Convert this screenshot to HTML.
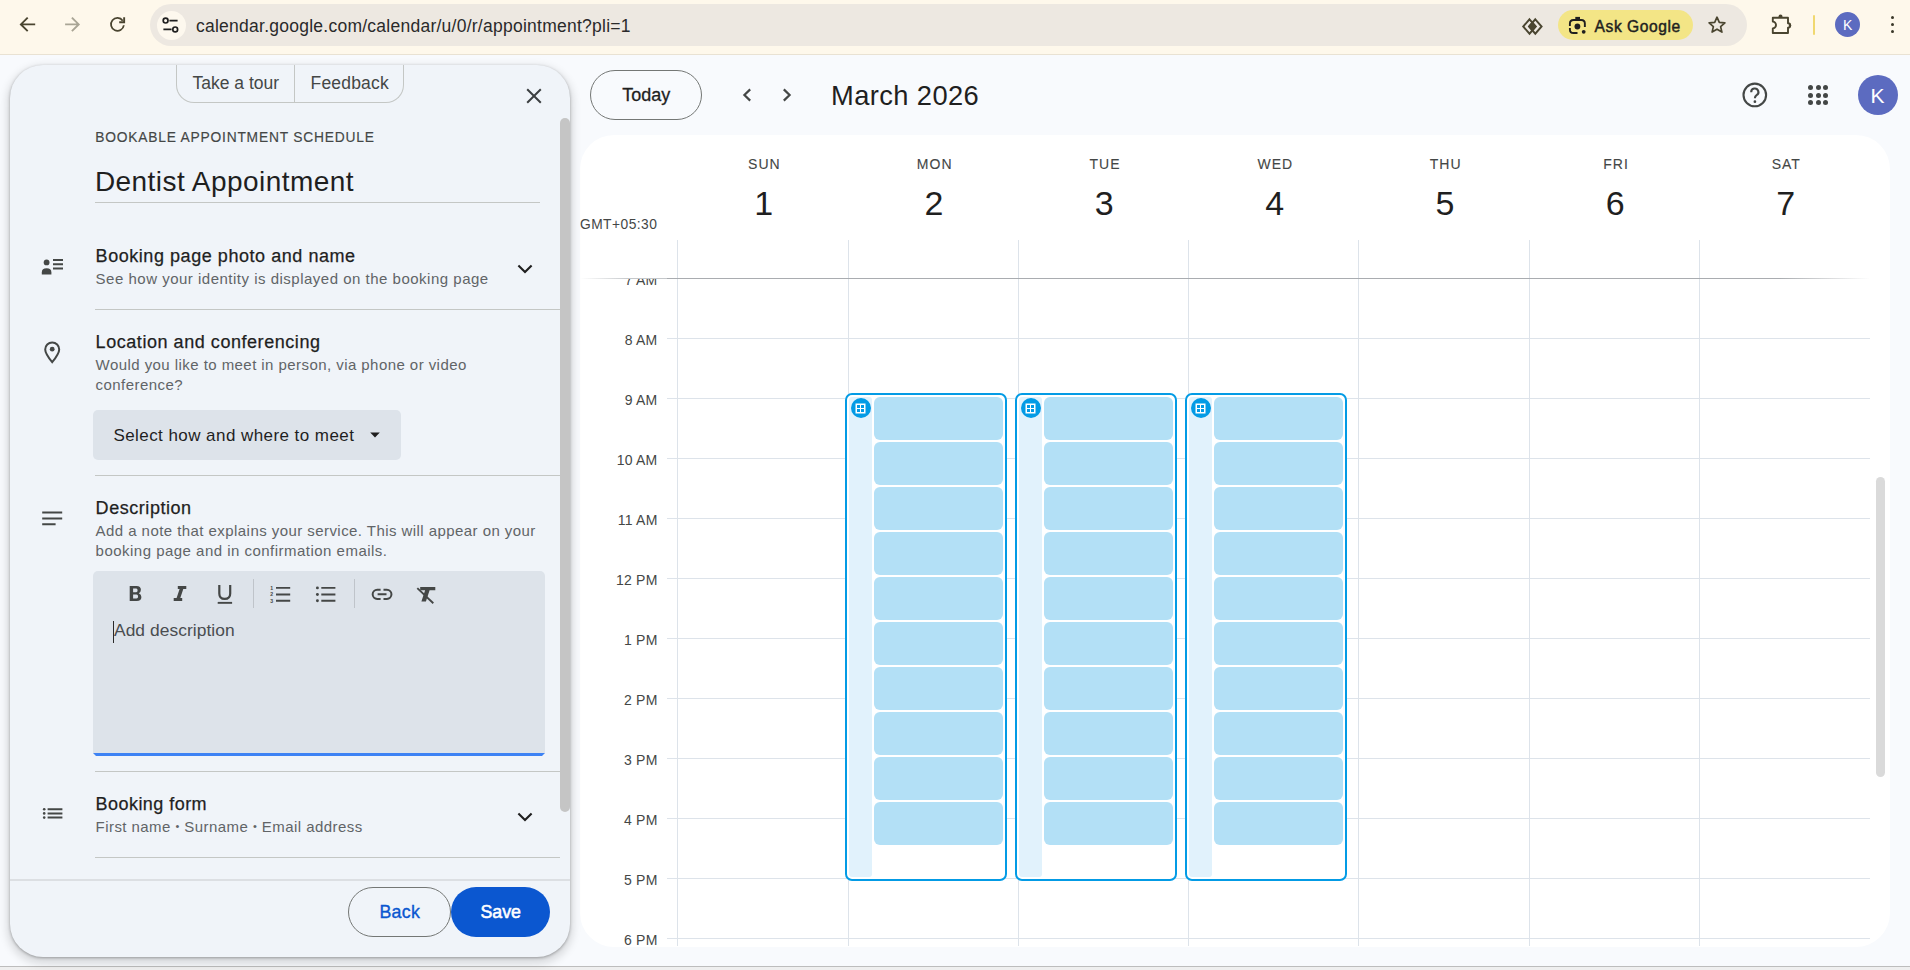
<!DOCTYPE html>
<html><head><meta charset="utf-8">
<style>
*{box-sizing:border-box;margin:0;padding:0}
html,body{width:1910px;height:970px;overflow:hidden;background:#F8FAFD;font-family:"Liberation Sans",sans-serif;color:#1F1F1F}
.a{position:absolute}
svg.a{overflow:visible}
.t{position:absolute;white-space:nowrap;line-height:1}
</style></head><body>
<div class="a" style="left:0px;top:0px;width:1910px;height:54px;background:#FEF8EB;"></div>
<div class="a" style="left:0px;top:54px;width:1910px;height:1px;background:#E9E2D3;"></div>
<svg class="a" style="left:19px;top:16px" width="18" height="18" viewBox="0 0 18 18"><path d="M16.2 8.4H2.6M8.7 1.6L1.9 8.4L8.7 15.2" fill="none" stroke="#4A4530" stroke-width="1.9"/></svg>
<svg class="a" style="left:64px;top:16px" width="18" height="18" viewBox="0 0 18 18"><path d="M1.1 8.4H14.4M7.9 1.6L14.7 8.4L7.9 15.2" fill="none" stroke="#A9A595" stroke-width="1.9"/></svg>
<svg class="a" style="left:109px;top:16px" width="18" height="18" viewBox="0 0 18 18"><path d="M13.73 4.65A6.45 6.45 0 1 0 14.84 9.25" fill="none" stroke="#4A4530" stroke-width="1.8"/><path d="M15.15 1.2V6.3H10.2" fill="none" stroke="#4A4530" stroke-width="1.9"/></svg>
<div class="a" style="left:150px;top:4px;width:1597px;height:42px;background:#EDE8E1;border-radius:21px"></div>
<div class="a" style="left:156.5px;top:10.5px;width:29.5px;height:29.5px;background:#FDF8EE;border-radius:50%"></div>
<svg class="a" style="left:162px;top:17px" width="18" height="17" viewBox="0 0 18 17"><circle cx="3.6" cy="3.6" r="2.4" fill="none" stroke="#1F1F1F" stroke-width="1.7"/><path d="M7.4 3.6H15.6M1.4 12.4H9.6" stroke="#1F1F1F" stroke-width="1.7"/><circle cx="13.2" cy="12.4" r="2.4" fill="none" stroke="#1F1F1F" stroke-width="1.7"/></svg>
<div class="t" style="left:196.00px;top:18.29px;font-size:17.5px;color:#2A2A2A;letter-spacing:0.25px;font-weight:400;">calendar.google.com/calendar/u/0/r/appointment?pli=1</div>
<svg class="a" style="left:1520px;top:16px" width="26" height="22" viewBox="0 0 26 22"><path d="M9.5 3.3L15.8 10.5L9.5 17.7L3.2 10.5Z" fill="none" stroke="#4A4530" stroke-width="1.9"/><path d="M15.3 3.3L21.6 10.5L15.3 17.7L9 10.5Z" fill="none" stroke="#4A4530" stroke-width="1.9"/><path d="M12.4 5.6L16.7 10.5L12.4 15.4L8.1 10.5Z" fill="#4A4530"/></svg>
<div class="a" style="left:1557.5px;top:10px;width:135px;height:30px;background:#F3E586;border-radius:15px"></div>
<svg class="a" style="left:1566px;top:14px" width="24" height="24" viewBox="0 0 24 24"><path d="M3.9 12V9.5Q3.9 5.95 7.5 5.95H15.3Q18.85 5.95 18.85 9.5V13M3.9 14V15.4Q3.9 18.95 7.5 18.95H11.5" fill="none" stroke="#1F1F1F" stroke-width="1.9"/><rect x="9.3" y="2.9" width="4.7" height="3.2" fill="#1F1F1F"/><circle cx="11.4" cy="12.5" r="2.9" fill="#1F1F1F"/><circle cx="17.7" cy="17.8" r="1.9" fill="#1F1F1F"/></svg>
<div class="t" style="left:1594.60px;top:19.39px;font-size:15.6px;color:#1F1F1F;letter-spacing:0.55px;font-weight:400;-webkit-text-stroke:0.45px #1F1F1F">Ask Google</div>
<svg class="a" style="left:1707px;top:15px" width="20" height="20" viewBox="0 0 20 20"><path d="M10 2.2L12.3 7.4L17.9 7.9L13.6 11.6L14.9 17.1L10 14.2L5.1 17.1L6.4 11.6L2.1 7.9L7.7 7.4Z" fill="none" stroke="#4A4530" stroke-width="1.7" stroke-linejoin="round"/></svg>
<svg class="a" style="left:1768px;top:12px" width="26" height="26" viewBox="0 0 26 26"><path d="M4.8 5.8H20V11.2A2.2 2.2 0 0 1 20 15.6V21H4.8V16.4A3.2 3.4 0 0 0 4.8 9.6Z" fill="none" stroke="#4A4530" stroke-width="1.9" stroke-linejoin="round"/><path d="M10.4 5A2.1 2.4 0 0 1 14.6 5Z" fill="#4A4530"/><path d="M20.8 11.2A2.4 2.2 0 0 1 20.8 15.6Z" fill="#4A4530"/></svg>
<div class="a" style="left:1812.5px;top:15px;width:2.6px;height:20px;background:#F0D870;border-radius:1.3px"></div>
<div class="a" style="left:1835px;top:12px;width:25.2px;height:25.2px;background:#5C6BC0;border-radius:50%"></div>
<div class="t" style="left:1837.60px;top:17.95px;width:20px;text-align:center;font-size:14px;color:#FFFFFF;letter-spacing:0px;font-weight:400;">K</div>
<div class="a" style="left:1890.8px;top:15.8px;width:3.6px;height:3.6px;background:#3A3829;border-radius:50%"></div>
<div class="a" style="left:1890.8px;top:22.7px;width:3.6px;height:3.6px;background:#3A3829;border-radius:50%"></div>
<div class="a" style="left:1890.8px;top:29.5px;width:3.6px;height:3.6px;background:#3A3829;border-radius:50%"></div>
<div class="a" style="left:0px;top:966px;width:1910px;height:1px;background:#BDBDBD;"></div>
<div class="a" style="left:0px;top:967px;width:1910px;height:3px;background:#EFEFEF;"></div>
<div class="a" style="left:590px;top:70px;width:112px;height:50px;background:transparent;border:1px solid #747775;border-radius:25px"></div>
<div class="t" style="left:622.20px;top:86.06px;font-size:18px;color:#1F1F1F;letter-spacing:0px;font-weight:400;-webkit-text-stroke:0.3px #1F1F1F">Today</div>
<svg class="a" style="left:741px;top:88px" width="12" height="14" viewBox="0 0 12 14"><path d="M9.2 1.4L3.4 7L9.2 12.6" fill="none" stroke="#444746" stroke-width="2.2"/></svg>
<svg class="a" style="left:781px;top:88px" width="12" height="14" viewBox="0 0 12 14"><path d="M2.8 1.4L8.6 7L2.8 12.6" fill="none" stroke="#444746" stroke-width="2.2"/></svg>
<div class="t" style="left:831.00px;top:81.89px;font-size:27.3px;color:#1F1F1F;letter-spacing:0.4px;font-weight:400;">March 2026</div>
<svg class="a" style="left:1742px;top:82px" width="26" height="26" viewBox="0 0 26 26"><circle cx="12.8" cy="12.9" r="11.3" fill="none" stroke="#444746" stroke-width="2.1"/><path d="M9.2 10.2A3.6 3.6 0 1 1 14.6 13.2Q12.9 14.3 12.9 16.2" fill="none" stroke="#444746" stroke-width="2.1"/><circle cx="12.9" cy="19.7" r="1.35" fill="#444746"/></svg>
<div class="a" style="left:1808.0px;top:85.0px;width:5.2px;height:5.2px;background:#444746;border-radius:50%"></div>
<div class="a" style="left:1815.6px;top:85.0px;width:5.2px;height:5.2px;background:#444746;border-radius:50%"></div>
<div class="a" style="left:1823.2px;top:85.0px;width:5.2px;height:5.2px;background:#444746;border-radius:50%"></div>
<div class="a" style="left:1808.0px;top:92.6px;width:5.2px;height:5.2px;background:#444746;border-radius:50%"></div>
<div class="a" style="left:1815.6px;top:92.6px;width:5.2px;height:5.2px;background:#444746;border-radius:50%"></div>
<div class="a" style="left:1823.2px;top:92.6px;width:5.2px;height:5.2px;background:#444746;border-radius:50%"></div>
<div class="a" style="left:1808.0px;top:100.2px;width:5.2px;height:5.2px;background:#444746;border-radius:50%"></div>
<div class="a" style="left:1815.6px;top:100.2px;width:5.2px;height:5.2px;background:#444746;border-radius:50%"></div>
<div class="a" style="left:1823.2px;top:100.2px;width:5.2px;height:5.2px;background:#444746;border-radius:50%"></div>
<div class="a" style="left:1858px;top:75px;width:40px;height:40px;background:#5C6BC0;border-radius:50%"></div>
<div class="t" style="left:1857.40px;top:84.82px;width:40px;text-align:center;font-size:21px;color:#FFFFFF;letter-spacing:0px;font-weight:400;">K</div>
<div class="a" style="left:580px;top:135px;width:1310px;height:812px;background:#FFFFFF;border-radius:34px"></div>
<div class="t" style="left:704.37px;top:157.45px;width:120px;text-align:center;font-size:14px;color:#444746;letter-spacing:1.0px;font-weight:400;-webkit-text-stroke:0.1px #444746">SUN</div>
<div class="t" style="left:723.66px;top:185.62px;width:80px;text-align:center;font-size:34px;color:#1F1F1F;letter-spacing:0px;font-weight:400;">1</div>
<div class="t" style="left:874.70px;top:157.45px;width:120px;text-align:center;font-size:14px;color:#444746;letter-spacing:1.0px;font-weight:400;-webkit-text-stroke:0.1px #444746">MON</div>
<div class="t" style="left:894.00px;top:185.62px;width:80px;text-align:center;font-size:34px;color:#1F1F1F;letter-spacing:0px;font-weight:400;">2</div>
<div class="t" style="left:1045.03px;top:157.45px;width:120px;text-align:center;font-size:14px;color:#444746;letter-spacing:1.0px;font-weight:400;-webkit-text-stroke:0.1px #444746">TUE</div>
<div class="t" style="left:1064.33px;top:185.62px;width:80px;text-align:center;font-size:34px;color:#1F1F1F;letter-spacing:0px;font-weight:400;">3</div>
<div class="t" style="left:1215.36px;top:157.45px;width:120px;text-align:center;font-size:14px;color:#444746;letter-spacing:1.0px;font-weight:400;-webkit-text-stroke:0.1px #444746">WED</div>
<div class="t" style="left:1234.66px;top:185.62px;width:80px;text-align:center;font-size:34px;color:#1F1F1F;letter-spacing:0px;font-weight:400;">4</div>
<div class="t" style="left:1385.69px;top:157.45px;width:120px;text-align:center;font-size:14px;color:#444746;letter-spacing:1.0px;font-weight:400;-webkit-text-stroke:0.1px #444746">THU</div>
<div class="t" style="left:1404.99px;top:185.62px;width:80px;text-align:center;font-size:34px;color:#1F1F1F;letter-spacing:0px;font-weight:400;">5</div>
<div class="t" style="left:1556.02px;top:157.45px;width:120px;text-align:center;font-size:14px;color:#444746;letter-spacing:1.0px;font-weight:400;-webkit-text-stroke:0.1px #444746">FRI</div>
<div class="t" style="left:1575.32px;top:185.62px;width:80px;text-align:center;font-size:34px;color:#1F1F1F;letter-spacing:0px;font-weight:400;">6</div>
<div class="t" style="left:1726.35px;top:157.45px;width:120px;text-align:center;font-size:14px;color:#444746;letter-spacing:1.0px;font-weight:400;-webkit-text-stroke:0.1px #444746">SAT</div>
<div class="t" style="left:1745.64px;top:185.62px;width:80px;text-align:center;font-size:34px;color:#1F1F1F;letter-spacing:0px;font-weight:400;">7</div>
<div class="t" style="left:580.00px;top:217.92px;font-size:13.8px;color:#444746;letter-spacing:0.45px;font-weight:400;">GMT+05:30</div>
<div class="a" style="left:580px;top:240px;width:1310px;height:707px;overflow:hidden;border-radius:0 0 34px 34px">
<div class="a" style="left:97px;top:0px;width:1px;height:706px;background:#DDE3EA;"></div>
<div class="a" style="left:268px;top:0px;width:1px;height:706px;background:#DDE3EA;"></div>
<div class="a" style="left:438px;top:0px;width:1px;height:706px;background:#DDE3EA;"></div>
<div class="a" style="left:608px;top:0px;width:1px;height:706px;background:#DDE3EA;"></div>
<div class="a" style="left:778px;top:0px;width:1px;height:706px;background:#DDE3EA;"></div>
<div class="a" style="left:949px;top:0px;width:1px;height:706px;background:#DDE3EA;"></div>
<div class="a" style="left:1119px;top:0px;width:1px;height:706px;background:#DDE3EA;"></div>
<div class="a" style="left:87px;top:98px;width:1203px;height:1px;background:#DDE3EA;"></div>
<div class="a" style="left:87px;top:158px;width:1203px;height:1px;background:#DDE3EA;"></div>
<div class="a" style="left:87px;top:218px;width:1203px;height:1px;background:#DDE3EA;"></div>
<div class="a" style="left:87px;top:278px;width:1203px;height:1px;background:#DDE3EA;"></div>
<div class="a" style="left:87px;top:338px;width:1203px;height:1px;background:#DDE3EA;"></div>
<div class="a" style="left:87px;top:398px;width:1203px;height:1px;background:#DDE3EA;"></div>
<div class="a" style="left:87px;top:458px;width:1203px;height:1px;background:#DDE3EA;"></div>
<div class="a" style="left:87px;top:518px;width:1203px;height:1px;background:#DDE3EA;"></div>
<div class="a" style="left:87px;top:578px;width:1203px;height:1px;background:#DDE3EA;"></div>
<div class="a" style="left:87px;top:638px;width:1203px;height:1px;background:#DDE3EA;"></div>
<div class="a" style="left:87px;top:698px;width:1203px;height:1px;background:#DDE3EA;"></div>
</div>
<div class="a" style="left:580px;top:279px;width:90px;height:667px;overflow:hidden">
<div class="t" style="left:0;top:-6.11px;width:77.5px;text-align:right;font-size:14px;color:#444746;letter-spacing:0.2px">7 AM</div>
<div class="t" style="left:0;top:53.89px;width:77.5px;text-align:right;font-size:14px;color:#444746;letter-spacing:0.2px">8 AM</div>
<div class="t" style="left:0;top:113.89px;width:77.5px;text-align:right;font-size:14px;color:#444746;letter-spacing:0.2px">9 AM</div>
<div class="t" style="left:0;top:173.89px;width:77.5px;text-align:right;font-size:14px;color:#444746;letter-spacing:0.2px">10 AM</div>
<div class="t" style="left:0;top:233.89px;width:77.5px;text-align:right;font-size:14px;color:#444746;letter-spacing:0.2px">11 AM</div>
<div class="t" style="left:0;top:293.89px;width:77.5px;text-align:right;font-size:14px;color:#444746;letter-spacing:0.2px">12 PM</div>
<div class="t" style="left:0;top:353.89px;width:77.5px;text-align:right;font-size:14px;color:#444746;letter-spacing:0.2px">1 PM</div>
<div class="t" style="left:0;top:413.89px;width:77.5px;text-align:right;font-size:14px;color:#444746;letter-spacing:0.2px">2 PM</div>
<div class="t" style="left:0;top:473.89px;width:77.5px;text-align:right;font-size:14px;color:#444746;letter-spacing:0.2px">3 PM</div>
<div class="t" style="left:0;top:533.89px;width:77.5px;text-align:right;font-size:14px;color:#444746;letter-spacing:0.2px">4 PM</div>
<div class="t" style="left:0;top:593.89px;width:77.5px;text-align:right;font-size:14px;color:#444746;letter-spacing:0.2px">5 PM</div>
<div class="t" style="left:0;top:653.89px;width:77.5px;text-align:right;font-size:14px;color:#444746;letter-spacing:0.2px">6 PM</div>
</div>
<div class="a" style="left:580px;top:278px;width:1290px;height:1px;background:linear-gradient(90deg,rgba(190,193,196,0) 0px,#C4C7CA 50px,#C4C7CA 87px,#A9ACB0 87px,#A9ACB0 1200px,rgba(169,172,176,0) 1290px);"></div>
<div class="a" style="left:845.00px;top:393px;width:162px;height:488px;border:2px solid #039BE5;border-radius:7px;background:#fff">
<div class="a" style="left:2px;top:2px;width:23px;height:480px;background:#E1F2FC;border-radius:3px"></div>
<div class="a" style="left:3.8px;top:2.5px;width:20px;height:20px;border-radius:50%;background:#039BE5"></div>
<svg class="a" style="left:8px;top:8px" width="11" height="11" viewBox="0 0 11 11"><rect x="1.25" y="1.25" width="8.5" height="8.5" fill="none" stroke="#fff" stroke-width="1.5"/><path d="M5.5 1.25V9.75M1.25 5.5H9.75" stroke="#fff" stroke-width="1"/></svg>
<div class="a" style="left:27px;top:2px;width:129px;height:42.7px;background:#B3E0F6;border-radius:6px"></div>
<div class="a" style="left:27px;top:47px;width:129px;height:42.7px;background:#B3E0F6;border-radius:6px"></div>
<div class="a" style="left:27px;top:92px;width:129px;height:42.7px;background:#B3E0F6;border-radius:6px"></div>
<div class="a" style="left:27px;top:137px;width:129px;height:42.7px;background:#B3E0F6;border-radius:6px"></div>
<div class="a" style="left:27px;top:182px;width:129px;height:42.7px;background:#B3E0F6;border-radius:6px"></div>
<div class="a" style="left:27px;top:227px;width:129px;height:42.7px;background:#B3E0F6;border-radius:6px"></div>
<div class="a" style="left:27px;top:272px;width:129px;height:42.7px;background:#B3E0F6;border-radius:6px"></div>
<div class="a" style="left:27px;top:317px;width:129px;height:42.7px;background:#B3E0F6;border-radius:6px"></div>
<div class="a" style="left:27px;top:362px;width:129px;height:42.7px;background:#B3E0F6;border-radius:6px"></div>
<div class="a" style="left:27px;top:407px;width:129px;height:42.7px;background:#B3E0F6;border-radius:6px"></div>
</div>
<div class="a" style="left:1015.00px;top:393px;width:162px;height:488px;border:2px solid #039BE5;border-radius:7px;background:#fff">
<div class="a" style="left:2px;top:2px;width:23px;height:480px;background:#E1F2FC;border-radius:3px"></div>
<div class="a" style="left:3.8px;top:2.5px;width:20px;height:20px;border-radius:50%;background:#039BE5"></div>
<svg class="a" style="left:8px;top:8px" width="11" height="11" viewBox="0 0 11 11"><rect x="1.25" y="1.25" width="8.5" height="8.5" fill="none" stroke="#fff" stroke-width="1.5"/><path d="M5.5 1.25V9.75M1.25 5.5H9.75" stroke="#fff" stroke-width="1"/></svg>
<div class="a" style="left:27px;top:2px;width:129px;height:42.7px;background:#B3E0F6;border-radius:6px"></div>
<div class="a" style="left:27px;top:47px;width:129px;height:42.7px;background:#B3E0F6;border-radius:6px"></div>
<div class="a" style="left:27px;top:92px;width:129px;height:42.7px;background:#B3E0F6;border-radius:6px"></div>
<div class="a" style="left:27px;top:137px;width:129px;height:42.7px;background:#B3E0F6;border-radius:6px"></div>
<div class="a" style="left:27px;top:182px;width:129px;height:42.7px;background:#B3E0F6;border-radius:6px"></div>
<div class="a" style="left:27px;top:227px;width:129px;height:42.7px;background:#B3E0F6;border-radius:6px"></div>
<div class="a" style="left:27px;top:272px;width:129px;height:42.7px;background:#B3E0F6;border-radius:6px"></div>
<div class="a" style="left:27px;top:317px;width:129px;height:42.7px;background:#B3E0F6;border-radius:6px"></div>
<div class="a" style="left:27px;top:362px;width:129px;height:42.7px;background:#B3E0F6;border-radius:6px"></div>
<div class="a" style="left:27px;top:407px;width:129px;height:42.7px;background:#B3E0F6;border-radius:6px"></div>
</div>
<div class="a" style="left:1185.00px;top:393px;width:162px;height:488px;border:2px solid #039BE5;border-radius:7px;background:#fff">
<div class="a" style="left:2px;top:2px;width:23px;height:480px;background:#E1F2FC;border-radius:3px"></div>
<div class="a" style="left:3.8px;top:2.5px;width:20px;height:20px;border-radius:50%;background:#039BE5"></div>
<svg class="a" style="left:8px;top:8px" width="11" height="11" viewBox="0 0 11 11"><rect x="1.25" y="1.25" width="8.5" height="8.5" fill="none" stroke="#fff" stroke-width="1.5"/><path d="M5.5 1.25V9.75M1.25 5.5H9.75" stroke="#fff" stroke-width="1"/></svg>
<div class="a" style="left:27px;top:2px;width:129px;height:42.7px;background:#B3E0F6;border-radius:6px"></div>
<div class="a" style="left:27px;top:47px;width:129px;height:42.7px;background:#B3E0F6;border-radius:6px"></div>
<div class="a" style="left:27px;top:92px;width:129px;height:42.7px;background:#B3E0F6;border-radius:6px"></div>
<div class="a" style="left:27px;top:137px;width:129px;height:42.7px;background:#B3E0F6;border-radius:6px"></div>
<div class="a" style="left:27px;top:182px;width:129px;height:42.7px;background:#B3E0F6;border-radius:6px"></div>
<div class="a" style="left:27px;top:227px;width:129px;height:42.7px;background:#B3E0F6;border-radius:6px"></div>
<div class="a" style="left:27px;top:272px;width:129px;height:42.7px;background:#B3E0F6;border-radius:6px"></div>
<div class="a" style="left:27px;top:317px;width:129px;height:42.7px;background:#B3E0F6;border-radius:6px"></div>
<div class="a" style="left:27px;top:362px;width:129px;height:42.7px;background:#B3E0F6;border-radius:6px"></div>
<div class="a" style="left:27px;top:407px;width:129px;height:42.7px;background:#B3E0F6;border-radius:6px"></div>
</div>
<div class="a" style="left:1875.5px;top:477px;width:9.5px;height:300px;background:#DADADA;border-radius:5px"></div>
<div class="a" style="left:10px;top:65px;width:560px;height:892px;background:#F0F4F9;border-radius:33px;box-shadow:0 1px 3px rgba(0,0,0,.3),0 4px 8px 3px rgba(0,0,0,.13)"></div>
<div class="a" style="left:175.5px;top:65px;width:228.5px;height:37.5px;background:transparent;border:1px solid #C4C7C5;border-top:none;border-radius:0 0 18px 18px"></div>
<div class="a" style="left:294px;top:65px;width:1px;height:37.5px;background:#C4C7C5;"></div>
<div class="t" style="left:192.50px;top:74.99px;font-size:17.5px;color:#444746;letter-spacing:0px;font-weight:400;">Take a tour</div>
<div class="t" style="left:310.50px;top:74.99px;font-size:17.5px;color:#444746;letter-spacing:0.2px;font-weight:400;">Feedback</div>
<svg class="a" style="left:526px;top:88px" width="16" height="16" viewBox="0 0 16 16"><path d="M1.2 1.2L14.8 14.8M14.8 1.2L1.2 14.8" stroke="#3C3F41" stroke-width="2"/></svg>
<div class="a" style="left:560px;top:118px;width:10px;height:694px;background:#C5C5C5;border-radius:5px"></div>
<div class="t" style="left:95.20px;top:130.52px;font-size:13.8px;color:#444746;letter-spacing:0.79px;font-weight:400;-webkit-text-stroke:0.15px #444746">BOOKABLE APPOINTMENT SCHEDULE</div>
<div class="t" style="left:94.90px;top:167.80px;font-size:28px;color:#1F1F1F;letter-spacing:0.45px;font-weight:400;">Dentist Appointment</div>
<div class="a" style="left:95px;top:202px;width:445px;height:1px;background:#C4C7C5;"></div>
<svg class="a" style="left:41px;top:258px" width="23" height="18" viewBox="0 0 23 18"><circle cx="5.6" cy="4.4" r="2.9" fill="#444746"/><path d="M0.8 16.6V14.4Q0.8 10.2 5.6 10.2Q10.4 10.2 10.4 14.4V16.6Z" fill="#444746"/><path d="M12 2H22M12 6.2H22M12 10.4H22" stroke="#444746" stroke-width="2"/></svg>
<div class="t" style="left:95.60px;top:247.16px;font-size:18px;color:#1F1F1F;letter-spacing:0.55px;font-weight:400;-webkit-text-stroke:0.25px #1F1F1F">Booking page photo and name</div>
<div class="t" style="left:95.60px;top:270.70px;font-size:15px;color:#616467;letter-spacing:0.5px;font-weight:400;">See how your identity is displayed on the booking page</div>
<svg class="a" style="left:517px;top:264px" width="16" height="10" viewBox="0 0 16 10"><path d="M1.4 1.4L8 8L14.6 1.4" fill="none" stroke="#1F1F1F" stroke-width="2.1"/></svg>
<div class="a" style="left:95px;top:308.5px;width:465px;height:1.5px;background:#C4C7C5;"></div>
<svg class="a" style="left:44px;top:341px" width="17" height="23" viewBox="0 0 17 23"><path d="M8.2 21.2Q1.2 12.4 1.2 8.4A7 7 0 0 1 15.2 8.4Q15.2 12.4 8.2 21.2Z" fill="none" stroke="#444746" stroke-width="2"/><circle cx="8.2" cy="8.2" r="2.4" fill="#444746"/></svg>
<div class="t" style="left:95.60px;top:333.16px;font-size:18px;color:#1F1F1F;letter-spacing:0.55px;font-weight:400;-webkit-text-stroke:0.25px #1F1F1F">Location and conferencing</div>
<div class="t" style="left:95.60px;top:356.60px;font-size:15px;color:#616467;letter-spacing:0.44px;font-weight:400;">Would you like to meet in person, via phone or video</div>
<div class="t" style="left:95.60px;top:376.50px;font-size:15px;color:#616467;letter-spacing:0.44px;font-weight:400;">conference?</div>
<div class="a" style="left:93px;top:410px;width:308px;height:50px;background:#DDE3EA;border-radius:5px"></div>
<div class="t" style="left:113.40px;top:427.01px;font-size:17px;color:#1F1F1F;letter-spacing:0.44px;font-weight:400;">Select how and where to meet</div>
<svg class="a" style="left:369px;top:431px" width="12" height="8" viewBox="0 0 12 8"><path d="M1.2 1.4H10.8L6 6.6Z" fill="#1F1F1F"/></svg>
<div class="a" style="left:95px;top:475px;width:465px;height:1px;background:#C4C7C5;"></div>
<svg class="a" style="left:41px;top:510px" width="23" height="17" viewBox="0 0 23 17"><path d="M1.2 2.6H21.2M1.2 8.4H21.2M1.2 14.2H14.6" stroke="#444746" stroke-width="2"/></svg>
<div class="t" style="left:95.60px;top:499.16px;font-size:18px;color:#1F1F1F;letter-spacing:0.55px;font-weight:400;-webkit-text-stroke:0.25px #1F1F1F">Description</div>
<div class="t" style="left:95.60px;top:523.10px;font-size:15px;color:#616467;letter-spacing:0.44px;font-weight:400;">Add a note that explains your service. This will appear on your</div>
<div class="t" style="left:95.60px;top:543.30px;font-size:15px;color:#616467;letter-spacing:0.48px;font-weight:400;">booking page and in confirmation emails.</div>
<div class="a" style="left:93px;top:571px;width:452px;height:182px;background:#DDE3EA;border-radius:5px 5px 0 0"></div>
<div class="a" style="left:93px;top:753px;width:452px;height:3px;background:#3D82F4;clip-path:polygon(0 0,100% 0,calc(100% - 3px) 100%,3px 100%)"></div>
<svg class="a" style="left:110px;top:575px" width="340" height="35" viewBox="110 575 340 35"><path d="M129.7 586H136.6Q140.9 586 140.9 589.8Q140.9 592.3 138.8 593.3Q141.4 594.2 141.4 597Q141.4 601 136.8 601H129.7Z M133.1 588.6V592.2H136.2Q137.6 592.2 137.6 590.4Q137.6 588.6 136.2 588.6Z M133.1 594.6V598.4H136.5Q138.1 598.4 138.1 596.5Q138.1 594.6 136.5 594.6Z" fill="#444746" fill-rule="evenodd"/>
<path d="M177.8 586H186.3V589H183.3L180.3 598H182.2V601H173.7V598H176.6L179.6 589H177.8Z" fill="#444746"/>
<path d="M219.3 585V593.4Q219.3 598.9 224.7 598.9Q230.2 598.9 230.2 593.4V585" fill="none" stroke="#444746" stroke-width="2.2"/>
<path d="M217.7 602.85H232.1" stroke="#444746" stroke-width="1.9"/>
<text x="270.2" y="589.8" font-size="5.2" font-family="Liberation Sans" fill="#444746" font-weight="700">1</text>
<text x="270.2" y="596.4" font-size="5.2" font-family="Liberation Sans" fill="#444746" font-weight="700">2</text>
<text x="270.2" y="602.7" font-size="5.2" font-family="Liberation Sans" fill="#444746" font-weight="700">3</text>
<path d="M276 587.9H290.2M276 594.5H290.2M276 600.8H290.2" stroke="#444746" stroke-width="1.9"/>
<circle cx="317.4" cy="587.9" r="1.45" fill="#444746"/><circle cx="317.4" cy="594.5" r="1.45" fill="#444746"/><circle cx="317.4" cy="600.8" r="1.45" fill="#444746"/>
<path d="M321.3 587.9H335.4M321.3 594.5H335.4M321.3 600.8H335.4" stroke="#444746" stroke-width="1.9"/>
<path d="M380.6 589.8H377.2A4.5 4.5 0 0 0 377.2 598.9H380.6M383.5 589.8H386.9A4.5 4.5 0 0 1 386.9 598.9H383.5M377.6 594.35H386.5" fill="none" stroke="#444746" stroke-width="2"/>
<path d="M420.2 587H435.3V590.3H429.6L425.9 601.6H421.4L425.1 590.3H420.2Z" fill="#444746"/>
<path d="M417.3 588.1L433.3 603.3" stroke="#444746" stroke-width="1.9"/></svg>
<div class="a" style="left:253px;top:578.5px;width:1px;height:29px;background:#BFC4CA;"></div>
<div class="a" style="left:354px;top:578.5px;width:1px;height:29px;background:#BFC4CA;"></div>
<div class="a" style="left:113px;top:621px;width:1px;height:22px;background:#2A2A2A;"></div>
<div class="t" style="left:114.00px;top:622.27px;font-size:17.4px;color:#4A4D50;letter-spacing:0.05px;font-weight:400;">Add description</div>
<div class="a" style="left:95px;top:771px;width:465px;height:1px;background:#C4C7C5;"></div>
<svg class="a" style="left:42px;top:807px" width="22" height="15" viewBox="0 0 22 15"><circle cx="2.2" cy="2.2" r="1.3" fill="#444746"/><circle cx="2.2" cy="6.4" r="1.3" fill="#444746"/><circle cx="2.2" cy="10.6" r="1.3" fill="#444746"/><path d="M5.6 2.2H20.4M5.6 6.4H20.4M5.6 10.6H20.4" stroke="#444746" stroke-width="2"/></svg>
<div class="t" style="left:95.60px;top:795.16px;font-size:18px;color:#1F1F1F;letter-spacing:0.45px;font-weight:400;-webkit-text-stroke:0.25px #1F1F1F">Booking form</div>
<div class="t" style="left:95.60px;top:818.70px;font-size:15px;color:#616467;letter-spacing:0.44px;font-weight:400;">First name <span style="font-size:11px;position:relative;top:-1.5px">&bull;</span> Surname <span style="font-size:11px;position:relative;top:-1.5px">&bull;</span> Email address</div>
<svg class="a" style="left:517px;top:812px" width="16" height="10" viewBox="0 0 16 10"><path d="M1.4 1.4L8 8L14.6 1.4" fill="none" stroke="#1F1F1F" stroke-width="2.1"/></svg>
<div class="a" style="left:95px;top:857px;width:465px;height:1px;background:#C4C7C5;"></div>
<div class="a" style="left:10px;top:879px;width:560px;height:1.5px;background:#DCDFE3;"></div>
<div class="a" style="left:348px;top:887px;width:102.5px;height:50px;background:transparent;border:1px solid #747775;border-radius:25px"></div>
<div class="t" style="left:379.40px;top:903.53px;font-size:17.8px;color:#0B57D0;letter-spacing:0.3px;font-weight:400;-webkit-text-stroke:0.35px #0B57D0">Back</div>
<div class="a" style="left:451px;top:887px;width:99px;height:50px;background:#0B57D0;border-radius:25px"></div>
<div class="t" style="left:480.60px;top:903.73px;font-size:17.8px;color:#FFFFFF;letter-spacing:-0.1px;font-weight:400;-webkit-text-stroke:0.55px #FFFFFF">Save</div>
</body></html>
